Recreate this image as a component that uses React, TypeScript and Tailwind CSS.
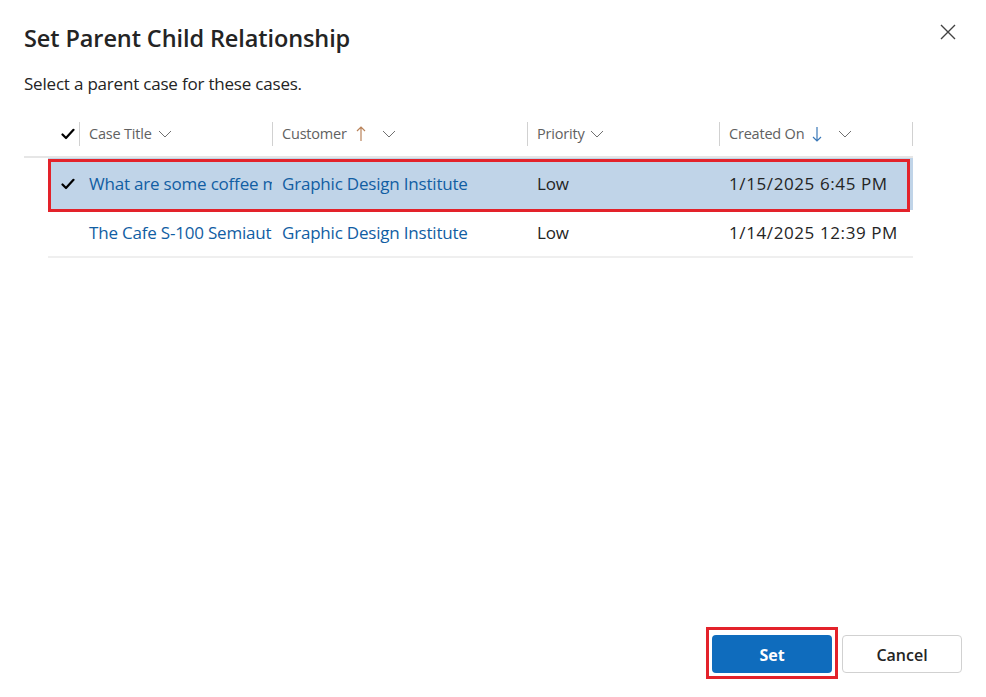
import React from 'react';

const Check = () => (
    <svg width="14" height="12" viewBox="0 0 14 12" fill="none">
        <path d="M1.5 6.5 L5 10 L12.5 1.8" stroke="#000" strokeWidth="2.2" strokeLinecap="round" strokeLinejoin="round" />
    </svg>
);

const Chevron = () => (
    <svg width="14" height="8" viewBox="0 0 14 8" fill="none">
        <path d="M1 1 L7 7 L13 1" stroke="#707070" strokeWidth="1" />
    </svg>
);

const ArrowUp = () => (
    <svg width="10" height="16" viewBox="0 0 10 16" fill="none">
        <path d="M5 1 V15 M1 5 L5 1 L9 5" stroke="#b9835a" strokeWidth="1.2" />
    </svg>
);

const ArrowDown = () => (
    <svg width="10" height="16" viewBox="0 0 10 16" fill="none">
        <path d="M5 1 V15 M1 11 L5 15 L9 11" stroke="#3a78b8" strokeWidth="1.2" />
    </svg>
);

const Divider = () => <span className="w-px h-6 bg-[#d1d1d1] shrink-0"></span>;

const columns = [
    { label: 'Case Title', width: 'w-[193px]', sort: null },
    { label: 'Customer', width: 'w-[255px]', sort: 'up' },
    { label: 'Priority', width: 'w-[192px]', sort: null },
    { label: 'Created On', width: 'w-[193px]', sort: 'down' },
];

const rows = [
    {
        title: 'What are some coffee machine options for my business?',
        customer: 'Graphic Design Institute',
        priority: 'Low',
        created: '1/15/2025 6:45 PM',
        selected: true,
    },
    {
        title: 'The Cafe S-100 Semiautomatic Espresso Machine',
        customer: 'Graphic Design Institute',
        priority: 'Low',
        created: '1/14/2025 12:39 PM',
        selected: false,
    },
];

const App = () => {
    return (
        <div className="w-[986px] h-[697px] bg-white flex flex-col font-['Open_Sans',sans-serif] text-[#242424]">
            <div className="flex items-start justify-between pl-6 pr-[27px] pt-[21px]">
                <h2 className="text-[23.5px] leading-[34px] font-semibold tracking-[-0.1px]">Set Parent Child Relationship</h2>
                <button className="p-[2px]">
                    <svg width="18" height="18" viewBox="0 0 18 18" fill="none">
                        <path d="M2 2 L16 16 M16 2 L2 16" stroke="#424242" strokeWidth="1.4" />
                    </svg>
                </button>
            </div>
            <p className="pl-6 mt-[17px] text-[17px] leading-[24px] tracking-[-0.2px]">Select a parent case for these cases.</p>

            <div className="ml-6 mt-[15px] w-[889px]">
                <div className="h-[47px] flex items-center border-b-2 border-[#e6e6e6] text-[14.5px] text-[#616161] tracking-[-0.2px]">
                    <div className="w-[55px] flex justify-end pr-[4px]">
                        <Check />
                    </div>
                    {columns.map((col) => (
                        <div key={col.label} className={`${col.width} flex items-center`}>
                            <Divider />
                            <span className="pl-[9px]">{col.label}</span>
                            {col.sort === 'up' && <span className="ml-[9px]"><ArrowUp /></span>}
                            {col.sort === 'down' && <span className="ml-[8px]"><ArrowDown /></span>}
                            <span className={col.sort ? 'ml-[16px]' : 'ml-[6px]'}><Chevron /></span>
                        </div>
                    ))}
                    <Divider />
                </div>

                <div className="ml-6 w-[865px] text-[17px] tracking-[-0.2px]">
                    {rows.map((row) => (
                        <div
                            key={row.title}
                            className={`relative flex items-center ${row.selected ? 'h-[52px] bg-[#c0d4e8]' : 'h-[48px] border-b-2 border-[#efefef]'}`}
                        >
                            {row.selected && (
                                <div className="absolute left-0 top-[1px] right-[3px] bottom-[-2px] border-[3px] border-[#e3222a] pointer-events-none"></div>
                            )}
                            <div className="w-[31px] flex justify-end pr-[4px]">{row.selected && <Check />}</div>
                            <div className="w-[193px] pl-[10px] pr-[1px] overflow-hidden whitespace-nowrap text-[#115ea3]">{row.title}</div>
                            <div className="w-[255px] pl-[10px] overflow-hidden whitespace-nowrap text-[#115ea3]">{row.customer}</div>
                            <div className="w-[192px] pl-[10px] whitespace-nowrap">{row.priority}</div>
                            <div className="w-[193px] pl-[10px] whitespace-nowrap tracking-[0.6px]">{row.created}</div>
                        </div>
                    ))}
                </div>
            </div>

            <div className="mt-auto flex justify-end gap-[10px] pr-6 pb-6">
                <div className="relative">
                    <button className="w-[120px] h-[38px] pt-[2px] rounded bg-[#0f6cbd] text-white text-[16px] font-bold">Set</button>
                    <div className="absolute left-[-6px] right-[-6px] top-[-8px] bottom-[-6px] border-[3px] border-[#e3222a] pointer-events-none"></div>
                </div>
                <button className="w-[120px] h-[38px] pt-[2px] rounded border border-[#d1d1d1] bg-white text-[16px] font-semibold text-[#242424]">Cancel</button>
            </div>
        </div>
    );
};

export default App;
